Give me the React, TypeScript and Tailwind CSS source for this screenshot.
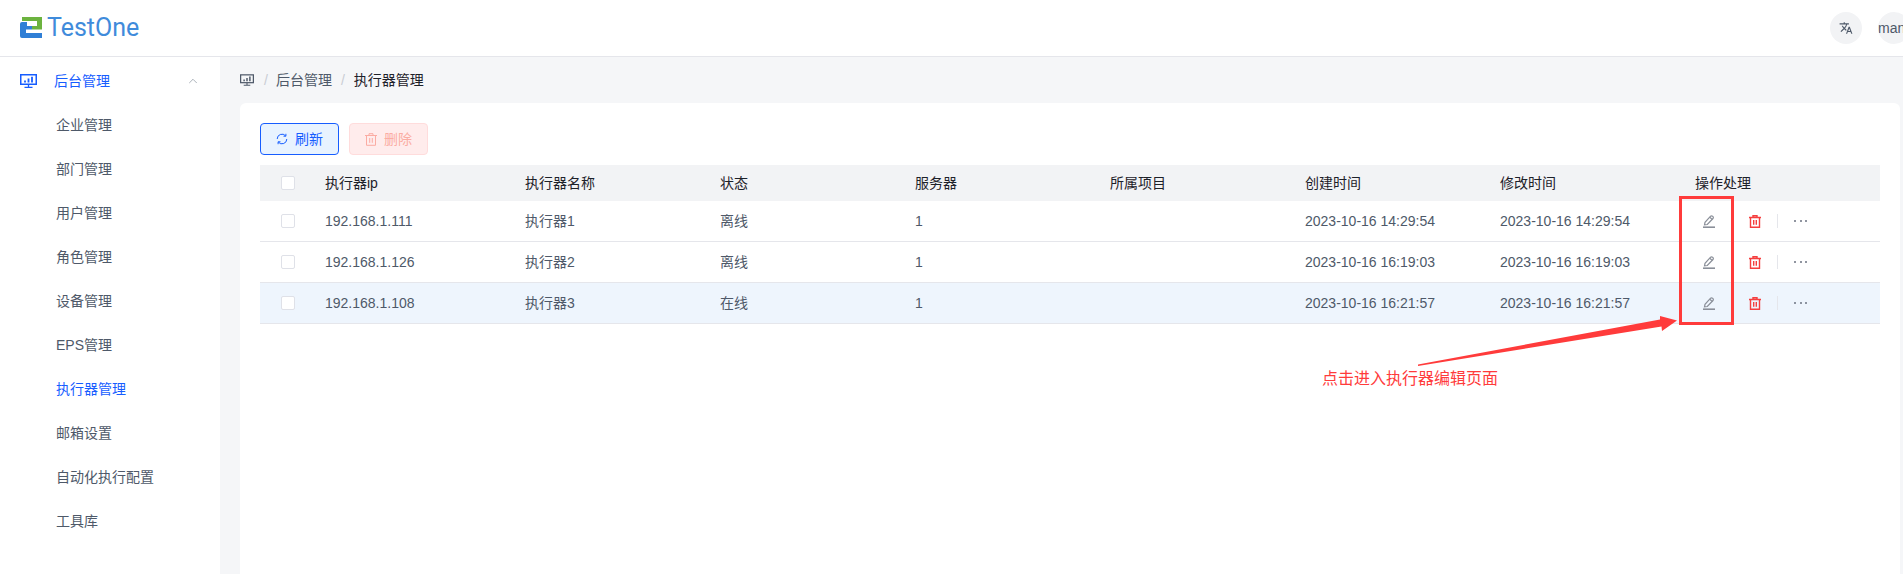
import { ChevronUp } from "lucide-react";
import { MdTranslate } from "react-icons/md";

const menuItems = [
  "企业管理",
  "部门管理",
  "用户管理",
  "角色管理",
  "设备管理",
  "EPS管理",
  "执行器管理",
  "邮箱设置",
  "自动化执行配置",
  "工具库",
];

const columns = ["执行器ip", "执行器名称", "状态", "服务器", "所属项目", "创建时间", "修改时间", "操作处理"];

const rows = [
  { ip: "192.168.1.111", name: "执行器1", status: "离线", server: "1", created: "2023-10-16 14:29:54", updated: "2023-10-16 14:29:54" },
  { ip: "192.168.1.126", name: "执行器2", status: "离线", server: "1", created: "2023-10-16 16:19:03", updated: "2023-10-16 16:19:03" },
  { ip: "192.168.1.108", name: "执行器3", status: "在线", server: "1", created: "2023-10-16 16:21:57", updated: "2023-10-16 16:21:57" },
];

const gridCols = "grid grid-cols-[53px_200px_195px_195px_195px_195px_195px_195px_197px] items-center";

const Logo = () => (
  <svg width="22" height="21" viewBox="0 0 22 21">
    <path d="M2 0H22V12.5H12V9H17V4H2Z" fill="#6cb33f" />
    <path d="M2 5H7V9H12V12.5H6V16H22V21H2Q0 21 0 19V7Q0 5 2 5Z" fill="#2f7fd6" />
  </svg>
);

const MonitorIcon = ({ className }: { className: string }) => (
  <svg className={className} viewBox="0 0 17 14" fill="none" stroke="currentColor">
    <rect x="0.75" y="0.75" width="15.5" height="9.5" strokeWidth="1.5" />
    <path d="M8.5 10.5V13M4.5 13.4H12.5" strokeWidth="1.3" />
    <path d="M5 8.5V6.5M8.5 8.5V4.5M12 8.5V2.8" strokeWidth="1.8" />
  </svg>
);

const RefreshIcon = () => (
  <svg width="12" height="12" viewBox="0 0 12 12" fill="none" stroke="currentColor" strokeWidth="1">
    <path d="M1.2 6A4.8 4.8 0 0 1 9.6 2.8M10.8 6A4.8 4.8 0 0 1 2.4 9.2" />
    <path d="M9.9 0.8V3.2H7.5M2.1 11.2V8.8H4.5" />
  </svg>
);

const TrashIcon = ({ className, strokeWidth }: { className: string; strokeWidth: number }) => (
  <svg className={className} viewBox="0 0 12 13" fill="none" stroke="currentColor" strokeWidth={strokeWidth}>
    <path d="M0 2.5H12M4 2.5V0.7H8V2.5" />
    <path d="M1.5 2.5V12.3H10.5V2.5" />
    <path d="M4.7 5V9.8M7.3 5V9.8" />
  </svg>
);

const EditIcon = () => (
  <svg className="w-3 h-[13px] text-[#8a8f99]" viewBox="0 0 12 13" fill="none" stroke="currentColor" strokeWidth="1.2">
    <path d="M1.5 9.8L2 7.3L7.6 1.2Q8.5 0.4 9.5 1.2L10 1.7Q10.7 2.6 10 3.5L4.3 9.5Z" />
    <path d="M6.8 2.2L9.2 4.4" />
    <path d="M0 12.2H12" strokeWidth="1.6" />
  </svg>
);

const Checkbox = () => (
  <div className="ml-[21px] w-3.5 h-3.5 rounded-[2px] border border-[#dfe1e8] bg-white" />
);

const ActionCell = () => (
  <div className="flex items-center pl-5">
    <EditIcon />
    <TrashIcon className="ml-[34px] w-3 h-[13px] text-[#f53f3f]" strokeWidth={1.4} />
    <div className="ml-4 w-px h-3.5 bg-[#e5e6eb]" />
    <div className="ml-4 flex gap-[3.5px]">
      <span className="w-[2px] h-[2px] rounded-full bg-[#6b7280]" />
      <span className="w-[2px] h-[2px] rounded-full bg-[#6b7280]" />
      <span className="w-[2px] h-[2px] rounded-full bg-[#6b7280]" />
    </div>
  </div>
);

const App = () => {
  return (
    <div className="relative flex flex-col w-full h-screen overflow-hidden bg-white text-sm text-[#4e5969] [font-family:'Liberation_Sans','Noto_Sans_CJK_SC',sans-serif]">
      {/* Header */}
      <header className="flex shrink-0 justify-between items-center h-[57px] pl-5 border-b border-[#e5e6eb]">
        <div className="flex items-center gap-[5px] -mt-[2px]">
          <Logo />
          <span className="text-[25px] leading-none text-[#3f8bdb] [font-family:Roboto,sans-serif]">TestOne</span>
        </div>
        <div className="flex items-center gap-4 -mr-[7px]">
          <div className="flex justify-center items-center w-8 h-8 rounded-full bg-[#f2f3f5]">
            <MdTranslate className="w-3.5 h-3.5 text-[#4e5969]" />
          </div>
          <div className="w-8 h-8 rounded-full bg-[#f2f3f5] overflow-hidden leading-8 whitespace-nowrap">man</div>
        </div>
      </header>

      <div className="flex flex-1 min-h-0">
        {/* Sidebar */}
        <aside className="w-[220px] shrink-0 pt-0.5">
          <div className="flex items-center h-11 pl-5 pr-5 text-[#165dff]">
            <MonitorIcon className="w-[17px] h-3.5" />
            <span className="ml-[17px]">后台管理</span>
            <ChevronUp className="ml-auto w-3.5 h-3.5 text-[#86909c]" strokeWidth={1.2} />
          </div>
          {menuItems.map((item) => (
            <div
              key={item}
              className={`flex items-center h-11 pl-14 ${item === "执行器管理" ? "text-[#165dff]" : ""}`}
            >
              {item}
            </div>
          ))}
        </aside>

        {/* Main */}
        <main className="flex flex-col flex-1 min-w-0 pl-5 pr-[3px] bg-[#f5f6f8]">
          <nav className="flex shrink-0 items-center h-[46px]">
            <MonitorIcon className="w-3.5 h-3 text-[#4e5969]" />
            <span className="ml-[10px] text-[#c9cdd4]">/</span>
            <span className="ml-[8px]">后台管理</span>
            <span className="ml-[9px] text-[#c9cdd4]">/</span>
            <span className="ml-[9px] text-[#1d2129]">执行器管理</span>
          </nav>

          <section className="flex-1 p-5 bg-white rounded-t-md">
            <div className="flex gap-2.5 mb-2.5">
              <button className="flex justify-center items-center gap-[7px] w-[79px] h-8 rounded-[4px] border border-[#165dff] bg-[#e8f3ff] text-[#165dff]">
                <RefreshIcon />
                刷新
              </button>
              <button className="flex justify-center items-center gap-[7px] w-[79px] h-8 rounded-[4px] border border-[#ffdcdc] bg-[#ffecec] text-[#fbaca3]">
                <TrashIcon className="w-3 h-[13px]" strokeWidth={1} />
                删除
              </button>
            </div>

            <div className={`${gridCols} h-9 bg-[#f2f3f5] text-[#1d2129]`}>
              <Checkbox />
              {columns.map((col) => (
                <div key={col} className="pl-3">
                  {col}
                </div>
              ))}
            </div>
            {rows.map((row, index) => (
              <div
                key={row.ip}
                className={`${gridCols} h-[41px] border-b border-[#e5e6eb] ${index === 2 ? "bg-[#eef5fd]" : ""}`}
              >
                <Checkbox />
                <div className="pl-3">{row.ip}</div>
                <div className="pl-3">{row.name}</div>
                <div className="pl-3">{row.status}</div>
                <div className="pl-3">{row.server}</div>
                <div className="pl-3"></div>
                <div className="pl-3">{row.created}</div>
                <div className="pl-3">{row.updated}</div>
                <ActionCell />
              </div>
            ))}
          </section>
        </main>
      </div>

      {/* Annotation drawn over the screenshot */}
      <div className="absolute left-[1679px] top-[196px] w-[55px] h-[129px] border-[3px] border-[#ff3b3b]" />
      <svg className="absolute left-[1410px] top-[310px]" width="275" height="60" viewBox="1410 310 275 60">
        <path d="M1418 364.5L1660 319.5L1660 316L1677 320.5L1662 331L1661.5 326.5L1418 366Z" fill="#ff3b3b" />
      </svg>
      <div className="absolute left-[1322px] top-[367px] text-base leading-6 text-[#ff3b3b]">点击进入执行器编辑页面</div>
    </div>
  );
};

export default App;
